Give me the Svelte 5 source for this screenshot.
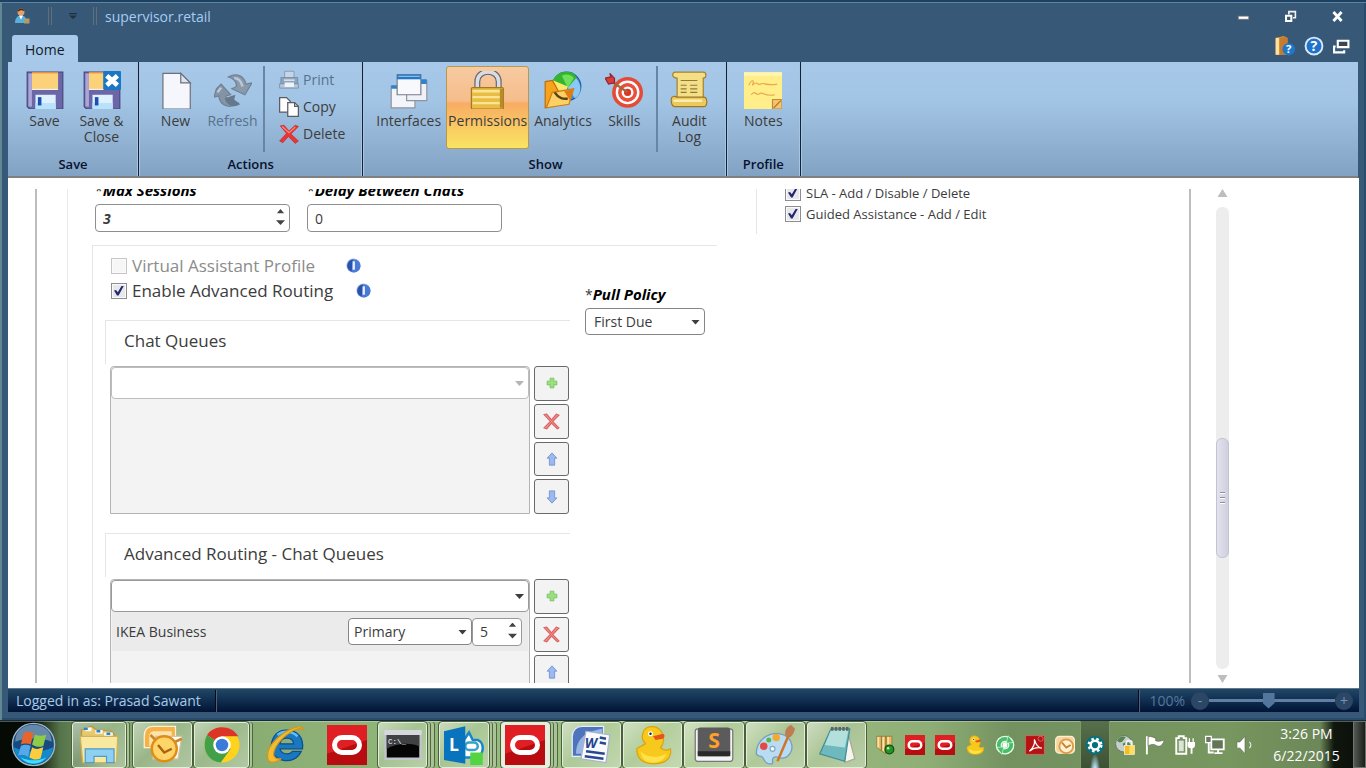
<script>
  let maxSessions = $state('3')
  let delay = $state('0')
  let virtualAssistant = $state(false)
  let advancedRouting = $state(true)
  let pullPolicy = $state('First Due')
  let level = $state('Primary')
  let priority = $state('5')
  let zoom = $state(47)

  const scroll = { top: 50, size: 26 }

  let permissions = $state([
    { id: 'sla', label: 'SLA - Add / Disable / Delete', checked: true },
    { id: 'guided', label: 'Guided Assistance - Add / Edit', checked: true }
  ])

  const queueActions = [
    { icon: 'plus', label: 'Add' },
    { icon: 'cross', label: 'Remove' },
    { icon: 'up', label: 'Move up' },
    { icon: 'down', label: 'Move down' }
  ]

  const apps = [
    { icon: 'explorer', label: 'Explorer', frame: 'stack' },
    { icon: 'outlook', label: 'Outlook', frame: 'single' },
    { icon: 'chrome', label: 'Chrome', frame: 'stack' },
    { icon: 'ie', label: 'Internet Explorer', frame: 'none' },
    { icon: 'oracle', label: 'Oracle', frame: 'none' },
    { icon: 'cmd', label: 'Command Prompt', frame: 'deep' },
    { icon: 'lync', label: 'Lync', frame: 'deep' },
    { icon: 'oracle', label: 'Service Cloud', frame: 'deep active' },
    { icon: 'word', label: 'Word', frame: 'single' },
    { icon: 'duck', label: 'Cyberduck', frame: 'single' },
    { icon: 'sublime', label: 'Sublime Text', frame: 'single' },
    { icon: 'paint', label: 'Paint', frame: 'single' },
    { icon: 'notepad', label: 'Notepad', frame: 'single' }
  ]

  const tray = ['shield', 'oracle', 'oracle', 'duck', 'sync', 'pdf', 'clock', 'gear', 'globe', 'flag', 'power', 'network', 'volume']
</script>

{#snippet floppy()}
  <path d="M1 1h30v31H3l-2-2z" fill="#6a66a8" stroke="#4b477f" />
  <path d="M2 2h3v28H2z" fill="#aaa6d8" />
  <path d="M5 1h22v15H5z" fill="#fbd27a" />
  <path d="M5 1h22v1H5z" fill="#e0883c" />
  <path d="M5 15h22v1H5z" fill="#f5efe4" />
  <path d="M8 20h17v12H8z" fill="#dff1ff" />
  <path d="M8 27h17v5H8z" fill="#b8e2fb" />
  <path d="M10 22h3v7h-3z" fill="#1b4fb0" />
{/snippet}

{#snippet duckShape()}
  <path d="M3 19c0 8 4 12 14 12s14-5 13-12c-3 2-6 1-8-1 3-3 3-8 1-12C20 0 12 0 9 4c-3 5-1 9 1 11-3 2-6 3-7 4z" fill="#f7c91c" stroke="#dba410" />
  <path d="M6 21c5 5 13 6 21 2-2 6-8 7-12 7-5 0-8-3-9-9z" fill="#ffe24a" />
  <path d="M16 9l8-2c2 1 1 3 0 4l-6 1z" fill="#e5541c" />
  <circle cx="14" cy="7" r="2" fill="#fff" />
  <circle cx="14" cy="7" r="1" fill="#222" />
{/snippet}

{#snippet icon(name)}
  <svg class="icon {name}" viewBox="0 0 32 32" aria-hidden="true">
    {#if name === 'save'}
      {@render floppy()}
    {:else if name === 'saveclose'}
      {@render floppy()}
      <rect x="17" y="0" width="15" height="16" rx="1" fill="#1b77c4" />
      <path d="M20 4l9 8M29 4l-9 8" stroke="#fff" stroke-width="4" />
    {:else if name === 'new'}
      <path d="M5 2h15l8 8v22H5z" fill="#f6f7fc" stroke="#6d7078" />
      <path d="M20 2v8h8z" fill="#dfe3ef" stroke="#6d7078" />
    {:else if name === 'refresh'}
      <path d="M0 22l2-7 4-4 8 9-4 1c1 4 5 7 11 6-7 5-16 3-17-6z" fill="#8494a6" stroke="#6f8194" />
      <path d="M12 5c7-4 13-1 15 6l5-1-6 10-11-5 4-2c0-4-3-7-7-8z" fill="#8a9aac" stroke="#708295" />
      <path d="M9 23l9-3-1 4 5 4c-5 3-11 2-13-5z" fill="#65788c" />
      <path d="M3 18l3-4M17 6c4 0 6 3 7 7" fill="none" stroke="#bccad8" stroke-width="2" />
    {:else if name === 'print'}
      <path d="M9 2h15v12H9z" fill="#c6d6e6" stroke="#6b8198" />
      <path d="M3 12h27v11H3z" fill="#8ea6bc" stroke="#657b92" />
      <path d="M1 22h30v7H1z" fill="#b4c6d8" stroke="#657b92" />
      <path d="M8 15h17v2H8zM9 20h15v7H9z" fill="#edf3f9" />
    {:else if name === 'copy'}
      <path d="M1 1h11l6 6v17H1z" fill="#fff" stroke="#5c5b63" stroke-width="2" />
      <path d="M14 9h11l6 6v16H14z" fill="#fff" stroke="#5c5b63" stroke-width="2" />
      <path d="M25 9v6h6" fill="none" stroke="#5c5b63" stroke-width="2" />
    {:else if name === 'delete'}
      <path d="M2 3l6-1 8 9 10-9 5 2-12 12 12 11-5 4-11-11-9 10-5-3 11-12z" fill="#ee3432" stroke="#b52a2a" />
      <path d="M5 4l11 10L26 5" fill="none" stroke="#ff8b82" stroke-width="2" />
    {:else if name === 'interfaces'}
      <path d="M1 13h20v18H1z" fill="#f3f5fa" stroke="#8f949e" />
      <path d="M14 8h17v17H14z" fill="#eef1f7" stroke="#8f949e" />
      <path d="M1 12h20v3H1zM26 7h5v4h-5z" fill="#2f82cf" />
      <path d="M6 3h20v17H6z" fill="#f8f9fc" stroke="#777c86" />
      <path d="M6 3h20v4H6z" fill="#2378c8" />
      <path d="M7 4h18v1H7z" fill="#8cc3ef" />
    {:else if name === 'lock'}
      <path d="M7 14V9c0-11 18-11 18 0v5" fill="none" stroke="#62656c" stroke-width="5" />
      <path d="M7 14V9c0-11 18-11 18 0v5" fill="none" stroke="#d9dce2" stroke-width="3" />
      <rect x="2" y="14" width="27" height="18" rx="1" fill="#e8bd45" stroke="#a47a20" />
      <path d="M3 17h23M3 22h23M3 27h23" stroke="#fbe592" stroke-width="2" />
      <path d="M26 15h3v16h-3z" fill="#b98b28" />
    {:else if name === 'analytics'}
      <circle cx="19" cy="13" r="12" fill="#3d8fd9" stroke="#1f5da5" />
      <path d="M20 14L7 9C10 1 18-1 25 2l3 4z" fill="#35b52f" />
      <path d="M20 14l-5-10c4-2 8-1 10 2z" fill="#6fe05a" />
      <path d="M20 13L8 8C5 14 9 23 16 24z" fill="#ffe56b" />
      <path d="M20 14l7-8c5 5 5 14-1 17z" fill="#8cc8f4" />
      <path d="M1 9l6-1 3 5 2 4v11L1 31z" fill="#f6a41c" stroke="#bc6c0d" />
      <path d="M2 31l5-13 18-3-4 13z" fill="#fcd064" stroke="#c87f15" />
      <path d="M9 18c3 5 8 6 11 5" fill="none" stroke="#5a4015" stroke-width="2" />
      <path d="M17 17l8-2-3 10z" fill="#e47b12" />
    {:else if name === 'skills'}
      <circle cx="19" cy="18" r="13" fill="#e54a36" />
      <circle cx="19" cy="18" r="10" fill="#fff" />
      <circle cx="19" cy="18" r="8" fill="#e9503c" />
      <circle cx="19" cy="18" r="5" fill="#fff" />
      <circle cx="19" cy="18" r="3" fill="#df3323" />
      <path d="M6 9l13 9" stroke="#9c6a3c" stroke-width="2" />
      <path d="M0 6l5-1-1-3 4 4v4l-5 1z" fill="#dc3a3c" stroke="#8e2733" />
    {:else if name === 'audit'}
      <path d="M4 1h24c3 0 3 5 0 5v21H6V6C2 6 1 2 4 1z" fill="#f4df86" stroke="#a6812c" />
      <path d="M1 24c0-3 3-3 5-2h22c4 0 4 8 0 8H4c-2 0-3-3-3-6z" fill="#ecc95b" stroke="#9e7726" />
      <path d="M3 25h24" stroke="#fff0b5" stroke-width="2" />
      <path d="M9 8h14M9 12h5M17 12h6M9 15h5M17 15h6M9 18h5M17 18h6" stroke="#8f7a42" stroke-width="1" />
    {:else if name === 'notes'}
      <path d="M0 1h32v31H0z" fill="#ffee8a" />
      <path d="M0 1h32v3H0z" fill="#fff6b2" />
      <path d="M24 24h8v8h-8z" fill="#f3c56a" stroke="#c28a3d" />
      <path d="M25 31l6-6" stroke="#b06d33" />
      <path d="M4 12c3-6 5-4 3 0 5-5 4 1 7-1s4 2 14 0M6 20c4-5 4 2 7-1 3-2 4 3 13 1" fill="none" stroke="#e9a94a" stroke-width="1" />
    {:else if name === 'user'}
      <circle cx="14" cy="8" r="7" fill="#e9a067" />
      <path d="M7 8c0-10 14-9 14-1-4-3-8-4-14 1z" fill="#402b1f" />
      <path d="M2 30c0-10 5-15 12-15s12 5 12 15z" fill="#5ab0db" />
      <path d="M10 15l4 8 4-8z" fill="#fff" />
      <rect x="20" y="21" width="11" height="10" fill="#b09c69" />
    {:else if name === 'helpbook'}
      <path d="M1 3l13-3 6 3v27H1z" fill="#d7913e" />
      <path d="M1 3h6v27H1z" fill="#ffe09a" />
      <path d="M7 3l10-2 3 2v26H7z" fill="#c57c30" />
      <circle cx="22" cy="21" r="10" fill="#1d78cb" />
      <text x="22" y="27" text-anchor="middle" font-size="18" font-weight="700" fill="#fff">?</text>
    {:else if name === 'help'}
      <circle cx="16" cy="16" r="15" fill="#d8ebfc" />
      <circle cx="16" cy="16" r="12" fill="#2172c8" />
      <text x="16" y="24" text-anchor="middle" font-size="23" font-weight="700" fill="#fff">?</text>
    {:else if name === 'windows'}
      <path d="M9 6h20v12H9z" fill="#3a4753" stroke="#fff" stroke-width="4" />
      <path d="M5 17H2v11h19v-4" fill="none" stroke="#fff" stroke-width="4" />
    {:else if name === 'minimize'}
      <path d="M3 15h26v8H3z" fill="#fff" stroke="#6e6d70" stroke-width="2" />
    {:else if name === 'restore'}
      <path d="M12 11V4h16v15h-6" fill="none" stroke="#f2f2f2" stroke-width="4" />
      <path d="M5 14h13v13H5z" fill="none" stroke="#fff" stroke-width="5" />
    {:else if name === 'close'}
      <path d="M6 5l20 22M26 5L6 27" stroke="#fff" stroke-width="7" />
    {:else if name === 'info'}
      <circle cx="16" cy="16" r="15" fill="#8fabe0" />
      <circle cx="17" cy="17" r="14" fill="#4a7ad8" />
      <path d="M15 3C8 4 2 10 3 19c1 5 5 8 9 9z" fill="#2a52ac" />
      <path d="M14 7h5v18h-5z" fill="#e9efff" />
    {:else if name === 'plus'}
      <path d="M11 3h10v8h8v10h-8v8H11v-8H3V11h8z" fill="#9be07d" stroke="#72bb5c" stroke-width="2" />
    {:else if name === 'cross'}
      <path d="M2 3l5-1 9 11 9-11 5 2-12 12 12 12-3 2-11-11-9 11-5-2 12-12z" fill="#f58f8c" stroke="#d95f5f" stroke-width="2" />
    {:else if name === 'up'}
      <path d="M16 2l11 12h-5v16H10V14H5z" fill="#9cb9f3" stroke="#7190cc" stroke-width="2" />
    {:else if name === 'down'}
      <path d="M16 30L5 18h5V2h12v16h5z" fill="#9cb9f3" stroke="#7190cc" stroke-width="2" />
    {:else if name === 'explorer'}
      <path d="M2 4l8-3 4 3 12 1 3 4v20H2z" fill="#e8c86d" stroke="#b89440" />
      <path d="M5 2h5v3H5zM13 4h6v3h-6zM20 6h7v3h-7z" fill="#f7f7ee" />
      <path d="M4 3h3M14 5h3M22 7h3" stroke="#2a83c6" stroke-width="2" />
      <path d="M1 9h30l-1 21H3z" fill="#f9e8a0" stroke="#cfb25d" />
      <path d="M5 19h23v11h-6v-5H12v5H5z" fill="#8ed0f2" stroke="#519cc8" />
    {:else if name === 'outlook'}
      <path d="M8 1h18v17H1V9c0-5 2-8 7-8z" fill="#f7b246" stroke="#fff3d5" />
      <path d="M5 17V9c0-3 2-4 5-4h13v12z" fill="#fde3ae" />
      <path d="M10 9h21l-3 18H8z" fill="#fff" stroke="#d5c4a6" />
      <path d="M6 8l10 10 15-7" fill="none" stroke="#c98920" stroke-width="2" />
      <circle cx="17" cy="19" r="10" fill="#ffd56a" stroke="#df8d17" stroke-width="2" />
      <path d="M12 16l5 6 6-3" fill="none" stroke="#a96410" stroke-width="2" />
    {:else if name === 'chrome'}
      <circle cx="16" cy="16" r="14" fill="#ffd31c" />
      <path d="M16 16L4 8C10-1 24 0 29 9H16z" fill="#dd3428" />
      <path d="M16 16L4 8C-1 18 4 29 15 30l8-11z" fill="#42a147" />
      <circle cx="16" cy="16" r="7" fill="#fff" />
      <circle cx="16" cy="16" r="5" fill="#3b7cdb" />
    {:else if name === 'ie'}
      <path d="M17 4c9 0 14 6 13 15H12c1 5 8 5 10 2h7c-5 12-25 9-24-5C6 9 10 4 17 4zm-5 11h11c-1-6-10-6-11 0z" fill="#1978bf" stroke="#0b4f91" fill-rule="evenodd" />
      <path d="M10 8c5-4 12-3 16 1" fill="none" stroke="#61c0f3" stroke-width="2" />
      <path d="M31 4C29-5 1 12 2 25c0 6 5 6 11 2-6 1-8-3-4-10C14 9 26 0 31 4z" fill="#f3bd32" stroke="#d9951b" />
    {:else if name === 'oracle'}
      <path d="M0 0h32v32H0z" fill="#b80c10" />
      <path d="M0 0h32v12L0 23z" fill="#e01f24" />
      <rect x="6" y="10" width="20" height="12" rx="6" fill="none" stroke="#fff" stroke-width="4" />
    {:else if name === 'cmd'}
      <path d="M2 5h28v22H2z" fill="#050505" stroke="#c1c4c8" stroke-width="2" />
      <path d="M1 4h30v4H1z" fill="#d4d7db" />
      <path d="M3 8h26v9C18 13 9 16 3 19z" fill="#3f4144" />
      <text x="4" y="15" font-family="Liberation Mono, monospace" font-size="6" fill="#fff">C:\_</text>
    {:else if name === 'lync'}
      <path d="M16 12l4-6 3 6h4c6 2 5 14-2 14h-9z" fill="#fff" stroke="#1686ca" stroke-width="2" />
      <rect x="17" y="14" width="10" height="6" rx="3" fill="none" stroke="#37a1c7" stroke-width="2" />
      <path d="M0 5l17-4v30L0 28z" fill="#0874bd" />
      <text x="4" y="21" font-size="14" font-weight="700" fill="#fff">L</text>
      <path d="M21 22h10v10H21z" fill="#55d442" />
    {:else if name === 'word'}
      <path d="M1 25V9c0-5 4-8 8-8h17v24z" fill="#5074bc" stroke="#e4edfb" />
      <path d="M4 23c0-12 8-18 21-20v20z" fill="#98b6e4" />
      <path d="M12 5l19 3-3 22-20-3z" fill="#fafbff" stroke="#a8b4cd" />
      <text x="11" y="18" font-size="11" font-style="italic" font-weight="700" fill="#24458e">W</text>
      <path d="M23 10l5 1M23 14l5 1M12 21l15 2M11 25l15 2" stroke="#29488f" stroke-width="2" />
    {:else if name === 'duck'}
      {@render duckShape()}
    {:else if name === 'sublime'}
      <rect x="1" y="3" width="30" height="26" rx="2" fill="#f3f3f3" stroke="#777" />
      <rect x="3" y="2" width="26" height="23" rx="2" fill="#5b5b5b" />
      <path d="M3 21h26v4H3z" fill="#292929" />
      <text x="16" y="18" text-anchor="middle" font-size="17" font-weight="700" fill="#ffa02b">S</text>
    {:else if name === 'paint'}
      <path d="M1 22C2 10 14 4 23 8c7 3 9 12 3 17-4 4-8-1-11 1s2 6-4 5c-5-1-3-5-6-6-2 0-4-1-4-3z" fill="#b9dcf2" stroke="#719ebf" />
      <circle cx="7" cy="17" r="3" fill="#e44945" /><circle cx="11" cy="12" r="2" fill="#58b64f" /><circle cx="17" cy="10" r="3" fill="#f4aa2c" />
      <circle cx="14" cy="19" r="2" fill="#f4fbff" stroke="#7daac5" />
      <path d="M18 29L27 8" stroke="#d0742a" stroke-width="2" />
      <path d="M24 8c0-5 2-7 5-8l3 3c-1 4-3 7-5 7z" fill="#bf7c51" />
    {:else if name === 'notepad'}
      <path d="M25 4l6 23-8 3z" fill="#f6f6ee" stroke="#aaa996" />
      <path d="M12 3h15l-4 26-20-6z" fill="#6eb9bd" stroke="#428e98" />
      <path d="M12 4h14l-3 14L7 16z" fill="#b3dfdc" />
      <path d="M12 3h15" stroke="#5d655c" stroke-width="3" stroke-dasharray="2 1" />
    {:else if name === 'shield'}
      <path d="M3 2h7v23L3 20zM11 2h6v28l-6-4zM18 2h9v18l-9 8z" fill="#e9bd62" stroke="#8b6226" />
      <path d="M5 3v17M13 3v22M21 3v14" stroke="#fff0c4" stroke-width="2" />
      <circle cx="23" cy="23" r="7" fill="#26932a" stroke="#0b520e" stroke-width="2" />
      <circle cx="21" cy="21" r="2" fill="#b6f0a1" />
    {:else if name === 'sync'}
      <circle cx="16" cy="16" r="10" fill="none" stroke="#e6ffec" stroke-width="10" />
      <circle cx="16" cy="16" r="10" fill="none" stroke="#48bd68" stroke-width="6" />
      <path d="M12 12l8-1v9l-8 1z" fill="#f2fff4" />
      <path d="M21 1l8 11-11 1zM11 31L3 20l11-1z" fill="#48bd68" stroke="#e6ffec" />
    {:else if name === 'pdf'}
      <path d="M1 1h30v30H1z" fill="#b51212" stroke="#d77" />
      <path d="M7 26C14 20 16 13 15 7c3 10 7 14 12 14-8-2-14 0-20 5z" fill="none" stroke="#fff" stroke-width="2" />
      <circle cx="25" cy="6" r="4" fill="none" stroke="#e88" />
    {:else if name === 'clock'}
      <rect x="1" y="2" width="30" height="27" rx="6" fill="#f5d6a2" stroke="#fff0d0" stroke-width="2" />
      <circle cx="18" cy="18" r="11" fill="#fff1cf" stroke="#df9a4a" stroke-width="3" />
      <path d="M11 12l7 8 7-4" fill="none" stroke="#c87e31" stroke-width="3" />
    {:else if name === 'gear'}
      <circle cx="16" cy="16" r="15" fill="#086f7c" />
      <circle cx="16" cy="16" r="10" fill="none" stroke="#fff" stroke-width="4" stroke-dasharray="4 4" />
      <circle cx="16" cy="16" r="7" fill="none" stroke="#fff" stroke-width="4" />
    {:else if name === 'globe'}
      <circle cx="14" cy="14" r="13" fill="#c5d0cc" stroke="#55645b" />
      <path d="M3 9c6-8 11-7 14-5l-6 7-4 1zM12 14l8-4 5 5-8 8z" fill="#56854c" />
      <rect x="15" y="17" width="16" height="14" fill="#f4bd26" stroke="#fff" />
      <path d="M18 17v-4c0-5 9-5 9 0v4" fill="none" stroke="#f2f2f2" stroke-width="3" />
      <path d="M23 17h8v14h-8z" fill="#ffdc63" />
    {:else if name === 'flag'}
      <path d="M3 31V2" stroke="#fff" stroke-width="3" />
      <path d="M5 3c5-2 8 1 12 2v4c4 2 7 1 14-1-2 5-4 10-9 10-4 0-5-3-9-3-3 0-5 1-8 2z" fill="#fff" stroke="#59654e" />
    {:else if name === 'power'}
      <path d="M6 5V2h8v3h4v25H2V5z" fill="none" stroke="#fff" stroke-width="3" />
      <path d="M6 9h8v17H6z" fill="#dce3d7" />
      <path d="M23 5v7M29 5v7" stroke="#fff" stroke-width="2" />
      <path d="M20 11h12v5c0 4-2 5-4 5v9h-3v-9c-3 0-5-1-5-5z" fill="#fff" />
    {:else if name === 'network'}
      <path d="M10 7h20v16H10z" fill="#647557" stroke="#fff" stroke-width="3" />
      <path d="M15 29h13M21 24v5M6 11v17h8" stroke="#fff" stroke-width="3" fill="none" />
      <path d="M1 2h9v10H1z" fill="#6b7a60" stroke="#fff" stroke-width="2" />
    {:else if name === 'volume'}
      <path d="M3 11h5l8-9v28l-8-9H3z" fill="#fff" stroke="#5b684f" />
      <path d="M23 11c3 3 3 7 0 10" fill="none" stroke="#e6ede0" stroke-width="2" />
    {:else if name === 'orb'}
      <circle cx="16" cy="16" r="15" fill="#174a80" stroke="#9fb8c9" />
      <path d="M2 18c8 4 20 4 28 0-2 16-26 16-28 0z" fill="#1489cc" />
      <path d="M7 25c5 3 13 3 18 0-4 6-14 6-18 0z" fill="#3fe0ff" />
      <path d="M3 14C3-2 29-2 29 14c-7-3-18-3-26 0z" fill="#6588a9" />
      <path d="M9 8c3-2 5-1 7 0l-2 8c-2-1-5-1-7 0z" fill="#e9642b" />
      <path d="M17 9c3 1 5 1 8 0l-2 8c-3 1-5 1-8-1z" fill="#8ecb46" />
      <path d="M7 17c2-1 5-1 7 0l-2 8c-2-2-5-2-7-1z" fill="#57a8e8" />
      <path d="M15 18c3 2 5 1 8 0l-2 8c-3 1-5 1-8-1z" fill="#fbcd3c" />
    {/if}
  </svg>
{/snippet}

{#snippet tool(name, label, active = false, disabled = false)}
  <button class="tool" class:active {disabled}>
    {@render icon(name)}
    <span>{label}</span>
  </button>
{/snippet}

{#snippet actions()}
  <div class="queue-actions">
    {#each queueActions as action (action.icon)}
      <button aria-label={action.label}>{@render icon(action.icon)}</button>
    {/each}
  </div>
{/snippet}

<div class="desktop">
  <div class="window">
    <header class="titlebar">
      {@render icon('user')}
      <i class="bars"></i>
      <button class="quick" aria-label="Customize toolbar"></button>
      <i class="bars"></i>
      <h1>supervisor.retail</h1>
      <div class="controls">
        <button aria-label="Minimize">{@render icon('minimize')}</button>
        <button aria-label="Restore">{@render icon('restore')}</button>
        <button aria-label="Close">{@render icon('close')}</button>
      </div>
    </header>

    <nav class="tabs">
      <button class="tab">Home</button>
      <div class="helpers">
        <button aria-label="Documentation">{@render icon('helpbook')}</button>
        <button aria-label="Help">{@render icon('help')}</button>
        <button aria-label="Windows">{@render icon('windows')}</button>
      </div>
    </nav>

    <div class="ribbon">
      <section class="group">
        <div class="tools">
          {@render tool('save', 'Save')}
          {@render tool('saveclose', 'Save & Close')}
        </div>
        <h2>Save</h2>
      </section>
      <section class="group">
        <div class="tools">
          {@render tool('new', 'New')}
          {@render tool('refresh', 'Refresh', false, true)}
          <i class="divider"></i>
          <div class="small-tools">
            <button disabled>{@render icon('print')}Print</button>
            <button>{@render icon('copy')}Copy</button>
            <button>{@render icon('delete')}Delete</button>
          </div>
        </div>
        <h2>Actions</h2>
      </section>
      <section class="group wide">
        <div class="tools">
          {@render tool('interfaces', 'Interfaces')}
          {@render tool('lock', 'Permissions', true)}
          {@render tool('analytics', 'Analytics')}
          {@render tool('skills', 'Skills')}
          <i class="divider"></i>
          {@render tool('audit', 'Audit Log')}
        </div>
        <h2>Show</h2>
      </section>
      <section class="group">
        <div class="tools">
          {@render tool('notes', 'Notes')}
        </div>
        <h2>Profile</h2>
      </section>
    </div>

    <main>
      <div class="sheet">
        <div class="chat">
          <div class="fields">
            <div class="field">
              <label for="max">*<b>Max Sessions</b></label>
              <div class="spin">
                <input id="max" class="strong" bind:value={maxSessions} />
                <i class="arrows"></i>
              </div>
            </div>
            <div class="field">
              <label for="delay">*<b>Delay Between Chats</b></label>
              <input id="delay" bind:value={delay} />
            </div>
          </div>

          <div class="routing">
            <div class="queues">
              <div class="option off">
                <label><input type="checkbox" bind:checked={virtualAssistant} disabled />Virtual Assistant Profile</label>
                {@render icon('info')}
              </div>
              <div class="option">
                <label><input type="checkbox" bind:checked={advancedRouting} />Enable Advanced Routing</label>
                {@render icon('info')}
              </div>

              <section class="queue">
                <h3>Chat Queues</h3>
                <div class="queue-body">
                  <div class="list">
                    <div class="drop pale">
                      <select aria-label="Chat queue" disabled><option></option></select>
                    </div>
                  </div>
                  {@render actions()}
                </div>
              </section>

              <section class="queue">
                <h3>Advanced Routing - Chat Queues</h3>
                <div class="queue-body">
                  <div class="list">
                    <div class="drop">
                      <select aria-label="Advanced routing queue"><option></option></select>
                    </div>
                    <div class="entry">
                      <span>IKEA Business</span>
                      <div class="drop level">
                        <select aria-label="Level" bind:value={level}><option>Primary</option></select>
                      </div>
                      <div class="spin priority">
                        <input aria-label="Priority" bind:value={priority} />
                        <i class="arrows"></i>
                      </div>
                    </div>
                  </div>
                  {@render actions()}
                </div>
              </section>
            </div>

            <div class="policy">
              <label for="policy">*<b>Pull Policy</b></label>
              <div class="drop">
                <select id="policy" bind:value={pullPolicy}><option>First Due</option></select>
              </div>
            </div>
          </div>
        </div>

        <div class="permissions">
          {#each permissions as permission (permission.id)}
            <label><input type="checkbox" bind:checked={permission.checked} />{permission.label}</label>
          {/each}
        </div>
      </div>

      <div class="scrollbar">
        <button class="to-top" aria-label="Scroll up"></button>
        <div class="track">
          <div class="thumb" style="top: {scroll.top}%; height: {scroll.size}%"></div>
        </div>
        <button class="to-bottom" aria-label="Scroll down"></button>
      </div>
    </main>

    <footer class="status">
      <span>Logged in as: Prasad Sawant</span>
      <i class="notch"></i>
      <div class="zoom">
        <i class="notch"></i>
        <label for="zoom">100%</label>
        <button aria-label="Zoom out">-</button>
        <input id="zoom" type="range" min="0" max="100" bind:value={zoom} />
        <button aria-label="Zoom in">+</button>
      </div>
    </footer>
  </div>

  <div class="taskbar">
    <button class="start" aria-label="Start">{@render icon('orb')}</button>
    <div class="apps">
      {#each apps as app (app.label)}
        <button class="app {app.frame}" aria-label={app.label}>{@render icon(app.icon)}</button>
      {/each}
    </div>
    <div class="tray">
      {#each tray as name}
        <button class:lit={name === 'gear'} aria-label={name}>{@render icon(name)}</button>
      {/each}
    </div>
    <div class="time"><span>3:26 PM</span><span>6/22/2015</span></div>
    <button class="peek" aria-label="Show desktop"></button>
  </div>
</div>

<style>
  :global(body) {
    background: #375877;
  }

  .desktop {
    height: 100vh;
    display: flex;
    flex-direction: column;
    overflow: hidden;
    font-family: "Open Sans", "Noto Sans", sans-serif;
    font-size: 14px;
    color: #3c3c3c;
  }

  .desktop *,
  .desktop *::before,
  .desktop *::after {
    box-sizing: border-box;
  }

  button,
  input,
  select {
    font: inherit;
    color: inherit;
    margin: 0;
    padding: 0;
    border: 0;
    background: none;
  }

  h1,
  h2,
  h3 {
    margin: 0;
    font-weight: 400;
  }

  .icon {
    display: block;
    flex: none;
    width: 16px;
    height: 16px;
  }

  .window {
    flex: 1;
    min-height: 0;
    display: flex;
    flex-direction: column;
    padding: 0 7px 8px 8px;
    background: #375877;
    border-top: 2px solid #1d4066;
    box-shadow: inset 2px 1px #5f8794, inset -2px -2px #294c6e;
  }

  /* title bar and tabs */
  .titlebar {
    display: flex;
    align-items: center;
    height: 32px;
    padding: 0 15px 4px 6px;
    color: #a4cdf3;
  }

  .bars {
    width: 4px;
    height: 18px;
    margin-left: 18px;
    border: solid #5f7078;
    border-width: 0 1px;
  }

  .quick {
    width: 8px;
    height: 6px;
    margin-left: 17px;
    background: #20303e;
    clip-path: polygon(0 0, 100% 0, 100% 20%, 0 20%, 0 40%, 100% 40%, 50% 100%, 0 40%);
  }

  .quick + .bars {
    margin-left: 16px;
  }

  h1 {
    margin-left: 8px;
    font-size: 14px;
  }

  .controls {
    display: flex;
    gap: 34px;
    margin-left: auto;
  }

  .controls .icon {
    width: 13px;
    height: 13px;
  }

  .tabs {
    display: flex;
    align-items: flex-end;
    height: 28px;
    padding: 0 9px 0 4px;
  }

  .tab {
    height: 27px;
    padding: 1px 13px 0;
    border-radius: 3px 3px 0 0;
    background: #a8c9e9;
    color: #101c28;
  }

  .helpers {
    display: flex;
    gap: 9px;
    margin-left: auto;
    padding-bottom: 6px;
  }

  .helpers .icon {
    width: 20px;
    height: 20px;
  }

  .helpers .windows {
    width: 17px;
  }

  /* ribbon */
  .ribbon {
    display: flex;
    height: 116px;
    flex: none;
    margin-right: 1px;
    padding-left: 1px;
    border-bottom: 2px solid #808080;
    background: linear-gradient(#a7c8e8, #a3c5e5 34%, #82a2c3);
  }

  .group {
    display: flex;
    flex-direction: column;
    border-right: 1px solid #0e2341;
    box-shadow: inset -1px 0 #a8c4de, 1px 0 #a8c4de;
    padding: 4px 9px 0;
  }

  .group:first-child {
    padding-left: 8px;
  }

  .group h2 {
    height: 24px;
    margin-top: auto;
    text-align: center;
    font-size: 13px;
    font-weight: 600;
    line-height: 24px;
    color: #07122e;
  }

  .tools {
    display: flex;
    gap: 2px;
    height: 86px;
  }

  .wide {
    padding-left: 11px;
  }

  .wide .tools {
    gap: 3px;
  }

  .tool {
    display: flex;
    flex-direction: column;
    align-items: center;
    width: min-content;
    min-width: 55px;
    height: 83px;
    padding: 4px 1px;
    line-height: 16px;
    border: 1px solid transparent;
    border-radius: 3px;
  }

  .tool .icon {
    width: 38px;
    height: 38px;
    margin-bottom: 4px;
  }

  .tool:disabled,
  .small-tools button:disabled {
    color: #57728e;
  }

  .tool.active {
    border-color: #b7994e;
    background: linear-gradient(#f7caa1, #f6bd8b 42%, #f8ac64 45%, #fae462);
  }

  .divider {
    width: 2px;
    margin: 0 1px;
    background: #6785a5;
  }

  .small-tools {
    display: flex;
    flex-direction: column;
    padding: 0 8px 0 11px;
  }

  .small-tools button {
    display: flex;
    align-items: center;
    gap: 4px;
    height: 27px;
  }

  .small-tools .icon {
    width: 20px;
    height: 20px;
  }

  /* form */
  main {
    flex: 1;
    min-height: 0;
    display: flex;
    padding: 11px 130px 5px 27px;
    background: #fff;
  }

  .sheet {
    flex: 1;
    display: flex;
    align-items: flex-start;
    padding-left: 30px;
    overflow: hidden;
    border: solid #bdbdbd;
    border-width: 0 2px;
  }

  .chat {
    width: 650px;
    margin-top: -9px;
    padding-left: 24px;
    border-left: 1px solid #eaeaea;
  }

  .fields {
    display: flex;
    gap: 17px;
    padding: 0 3px 13px;
  }

  .field {
    width: 195px;
  }

  .field label,
  .policy label {
    display: block;
    height: 24px;
    line-height: 20px;
  }

  label b {
    color: #000;
    font-size: 15px;
    font-style: italic;
  }

  .field input {
    display: block;
    width: 100%;
    height: 28px;
    padding: 0 7px;
    border: 1px solid #8e8e8e;
    border-radius: 4px;
  }

  .field .strong {
    font-style: italic;
    font-weight: 700;
  }

  .spin,
  .drop {
    position: relative;
  }

  .arrows {
    position: absolute;
    top: 5px;
    right: 5px;
    width: 9px;
    height: 16px;
    background: #444;
    clip-path: polygon(50% 0, 90% 26%, 10% 26%, 50% 0, 50% 100%, 0 70%, 100% 70%, 50% 100%);
  }

  .drop::after {
    content: "";
    position: absolute;
    top: 50%;
    right: 5px;
    width: 9px;
    height: 5px;
    margin-top: -2px;
    background: #3d3d3d;
    clip-path: polygon(0 0, 100% 0, 50% 100%);
    pointer-events: none;
  }

  .drop.pale::after {
    background: #b5b5b5;
  }

  select {
    display: block;
    appearance: none;
    width: 100%;
    height: 27px;
    padding: 0 8px;
    border: 1px solid #858585;
    border-radius: 4px;
    background: #fff;
    opacity: 1;
  }

  .routing {
    display: flex;
    gap: 15px;
    border: solid #e6e6e6;
    border-width: 1px 0 0 1px;
    padding: 7px 0 0 12px;
  }

  .queues {
    width: 465px;
  }

  .option,
  .option label {
    display: flex;
    align-items: center;
  }

  .option {
    height: 25px;
    padding-left: 6px;
    gap: 23px;
    font-size: 17px;
  }

  .option.off {
    gap: 31px;
    color: #8c8c8c;
  }

  .option .icon {
    width: 15px;
    height: 15px;
  }

  input[type="checkbox"] {
    appearance: none;
    flex: none;
    width: 16px;
    height: 16px;
    margin-right: 5px;
    border: 1px solid #8c8e92;
    background: #e7e8ec;
    box-shadow: inset 0 0 0 1px #fafafa;
  }

  input[type="checkbox"]:disabled {
    border-color: #c6c6c6;
    background: #f6f6f6;
  }

  input[type="checkbox"]:checked::after {
    content: "";
    display: block;
    width: 10px;
    height: 10px;
    margin: 2px;
    background: #26266f;
    clip-path: polygon(0 50%, 20% 44%, 38% 68%, 78% 0, 100% 0, 46% 100%, 30% 100%);
  }

  .queue {
    margin-bottom: 19px;
  }

  .option + .queue {
    margin-top: 17px;
  }

  h3 {
    height: 44px;
    margin-bottom: 2px;
    padding-left: 18px;
    border: solid #e6e6e6;
    border-width: 1px 0 0 1px;
    font-size: 17px;
    line-height: 40px;
  }

  .queue-body {
    display: flex;
    gap: 4px;
    height: 148px;
    padding: 0 1px 0 5px;
  }

  .list {
    flex: 1;
    border: 1px solid #b3b3b3;
    border-radius: 4px 4px 0 0;
    background: #f3f3f3;
  }

  .list > .drop select {
    height: 32px;
    border-color: #999;
  }

  .list > .pale select {
    border-color: #bdbdbd;
  }

  .entry {
    display: flex;
    align-items: center;
    height: 39px;
    margin: 0 1px;
    padding: 0 6px 0 4px;
    background: #ebebeb;
  }

  .level {
    width: 124px;
    margin-left: auto;
  }

  .level select {
    padding: 0 5px;
  }

  .priority {
    width: 50px;
  }

  .priority input {
    display: block;
    width: 100%;
    height: 28px;
    padding: 0 7px;
    border: 1px solid #999;
    border-radius: 4px;
    background: #fff;
  }

  .queue-actions {
    display: flex;
    flex-direction: column;
    gap: 3px;
    width: 35px;
  }

  .queue-actions button {
    flex: 1;
    display: grid;
    place-items: center;
    border: 1px solid #696969;
    border-radius: 3px;
    background: #f3f3f3;
  }

  .queue-actions .icon {
    width: 14px;
    height: 14px;
  }

  .queue-actions .plus {
    width: 12px;
    height: 12px;
  }

  .queue-actions .cross {
    width: 17px;
    height: 17px;
  }

  .policy {
    width: 120px;
    padding-top: 31px;
  }

  .permissions {
    display: flex;
    flex-direction: column;
    height: 45px;
    margin-left: 39px;
    padding-left: 28px;
    border-left: 1px solid #e6e6e6;
    font-size: 13px;
  }

  .permissions label {
    display: flex;
    align-items: center;
    flex: none;
    height: 21px;
  }

  .permissions label:first-child {
    margin-top: -7px;
  }

  .scrollbar {
    display: flex;
    flex-direction: column;
    align-items: center;
    width: 13px;
    margin-left: 25px;
  }

  .scrollbar button {
    width: 10px;
    height: 8px;
    background: #bebebe;
  }

  .to-top {
    clip-path: polygon(50% 0, 100% 100%, 0 100%);
  }

  .to-bottom {
    clip-path: polygon(0 0, 100% 0, 50% 100%);
  }

  .track {
    position: relative;
    flex: 1;
    width: 100%;
    margin: 10px 0 6px;
    border-radius: 6px;
    background: #ededed;
  }

  .thumb {
    position: absolute;
    width: 100%;
    border: 1px solid #c3c3d2;
    border-radius: 6px;
    background:
      linear-gradient(#8f909f 1px, #fff 1px 2px, transparent 2px 5px, #8f909f 5px 6px, #fff 6px 7px, transparent 7px 10px, #8f909f 10px 11px, #fff 11px) center / 5px 12px no-repeat,
      linear-gradient(90deg, #e3e3f0, #cfcfdd);
  }

  /* status bar */
  .status {
    display: flex;
    align-items: center;
    height: 24px;
    flex: none;
    padding: 0 6px 0 8px;
    background: linear-gradient(#204767, #001437);
    border-top: 1px solid #63788a;
    color: #a9cae8;
  }

  .notch {
    width: 2px;
    height: 22px;
    margin-left: 14px;
    background: #010b1d;
    border-right: 1px solid #52606f;
  }

  .zoom {
    display: flex;
    align-items: center;
    margin-left: auto;
    color: #58789b;
  }

  .zoom label {
    margin: 0 6px 0 9px;
  }

  .zoom button {
    width: 18px;
    height: 18px;
    border-radius: 50%;
    background: #2c4766;
    color: #7594b5;
    line-height: 16px;
  }

  .zoom input {
    appearance: none;
    width: 126px;
    height: 16px;
    background: linear-gradient(#607fa1, #607fa1) center / 100% 3px no-repeat;
  }

  .zoom input::-webkit-slider-thumb {
    appearance: none;
    width: 12px;
    height: 16px;
    background: #54769d;
    clip-path: polygon(0 0, 100% 0, 100% 65%, 50% 100%, 0 65%);
  }

  /* taskbar */
  .taskbar {
    display: flex;
    flex: none;
    height: 48px;
    border-top: 1px solid #152c38;
    background:
      linear-gradient(rgba(255, 255, 255, 0.3) 1px, transparent 1px),
      linear-gradient(90deg, #060a05 0 34px, #55744a 60px, #81a46c 110px, #91b67a 30%, #a4c487 50%, #8fae76 68%, #73915f 74%, #78965f 90%, #6c8758 1320px, #10160d 1334px, #0b0d0a);
  }

  .start {
    padding: 0 11px;
    margin-right: 5px;
  }

  .start .icon {
    width: 45px;
    height: 45px;
  }

  .apps {
    flex: 0 1 796px;
    display: grid;
    grid-template-columns: repeat(13, 1fr);
    min-width: 0;
  }

  .app {
    display: grid;
    place-items: center;
    margin: 1px 2px 0 0;
    border-radius: 3px;
  }

  .app .icon {
    width: 40px;
    height: 40px;
  }

  .single,
  .stack,
  .deep {
    border: 1px solid #e2eed5;
    background: linear-gradient(135deg, rgba(255, 255, 255, 0.5), rgba(255, 255, 255, 0.18) 45%, rgba(255, 255, 255, 0.35));
    outline: 1px solid #4b5f3f;
  }

  .stack {
    margin-right: 7px;
    box-shadow: 3px 0 #a9c397, 4px 0 #50663f;
  }

  .deep {
    margin-right: 12px;
    box-shadow: 3px 0 #a9c397, 4px 0 #50663f, 7px 0 #a9c397, 8px 0 #50663f;
  }

  .active.app {
    background: rgba(255, 255, 255, 0.75);
  }

  .tray {
    display: flex;
    margin-left: 2px;
  }

  .tray button {
    display: grid;
    place-items: center;
    width: 30px;
  }

  .tray .icon {
    width: 20px;
    height: 20px;
  }

  .tray .lit {
    border: solid #7e9868;
    border-width: 0 1px;
    background: radial-gradient(at 50% 110%, #b6dcf4 8%, transparent 26%), linear-gradient(#58704a, #3d5135);
  }

  .time {
    flex: 1;
    display: flex;
    flex-direction: column;
    justify-content: center;
    align-items: center;
    line-height: 22px;
    color: #fff;
  }

  .peek {
    width: 13px;
    border: 1px solid #6d746c;
    background: linear-gradient(90deg, #555a55, #1a1d19);
  }
</style>
